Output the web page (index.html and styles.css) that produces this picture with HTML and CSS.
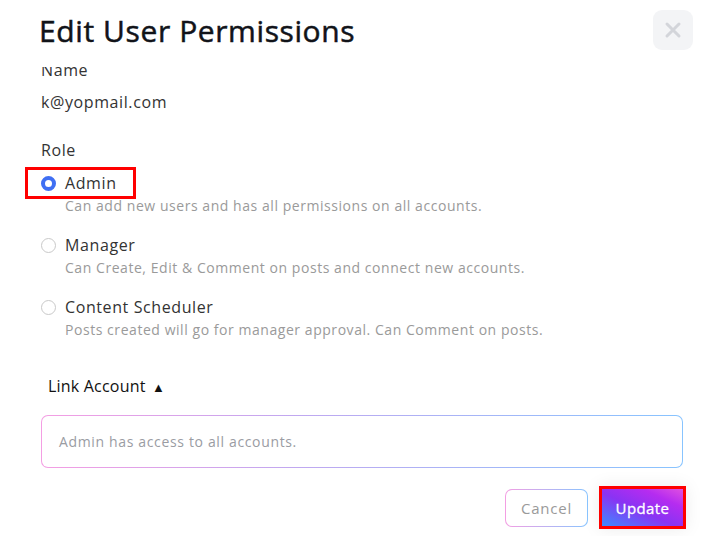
FILE: index.html
```html
<!DOCTYPE html>
<html>
<head>
<meta charset="utf-8">
<link rel="stylesheet" href="styles.css">
</head>
<body>
<div class="modal">
  <header class="head">
    <h1 class="title">Edit User Permissions</h1>
    <button class="close" aria-label="Close">
      <svg width="18" height="18" viewBox="0 0 18 18"><path d="M3 3 L15 15 M15 3 L3 15" stroke="#d3d5da" stroke-width="3" stroke-linecap="round"/></svg>
    </button>
  </header>
  <div class="body">
    <div class="inner">
      <div class="label name-label">Name</div>
      <div class="value">k@yopmail.com</div>
      <div class="label role-label">Role</div>
      <div class="options">
        <div class="opt">
          <div class="opt-row hl"><span class="radio on"></span><span class="opt-name">Admin</span></div>
          <div class="desc">Can add new users and has all permissions on all accounts.</div>
        </div>
        <div class="opt">
          <div class="opt-row"><span class="radio"></span><span class="opt-name">Manager</span></div>
          <div class="desc">Can Create, Edit &amp; Comment on posts and connect new accounts.</div>
        </div>
        <div class="opt">
          <div class="opt-row"><span class="radio"></span><span class="opt-name">Content Scheduler</span></div>
          <div class="desc">Posts created will go for manager approval. Can Comment on posts.</div>
        </div>
      </div>
      <div class="link">Link Account <span class="tri">▲</span></div>
      <div class="field">Admin has access to all accounts.</div>
      <div class="actions">
        <button class="btn cancel">Cancel</button>
        <button class="btn update">Update</button>
      </div>
    </div>
  </div>
</div>
</body>
</html>
```
FILE: styles.css
```css
html, body {
  margin: 0;
  padding: 0;
  background: #ffffff;
}
body {
  font-family: "Open Sans", "Noto Sans", sans-serif;
  color: #2b2b2b;
  width: 724px;
  height: 536px;
  overflow: hidden;
}
.modal {
  width: 724px;
  height: 536px;
  display: flex;
  flex-direction: column;
  background: #fff;
}
.head {
  height: 67px;
  flex: none;
  display: flex;
  align-items: flex-start;
  justify-content: space-between;
  padding: 0 31px 0 39px;
  background: #fff;
  position: relative;
  z-index: 2;
}
.title {
  margin: 10px 0 0 0;
  font-size: 30px;
  font-weight: 400;
  -webkit-text-stroke: 0.5px #111319;
  color: #111319;
  letter-spacing: 0.6px;
}
.close {
  margin-top: 10px;
  width: 40px;
  height: 40px;
  border: none;
  border-radius: 9px;
  background: #f3f4f6;
  display: flex;
  align-items: center;
  justify-content: center;
  padding: 0;
}
.body {
  flex: 1;
  overflow: hidden;
}
.inner {
  margin-top: -7px;
  padding: 0 41px;
}
.label, .value, .opt-row {
  font-size: 16px;
  letter-spacing: 0.6px;
  color: #333;
  line-height: 20px;
}
.value {
  margin-top: 12px;
}
.role-label {
  margin-top: 28px;
}
.options {
  margin-top: 13px;
  display: flex;
  flex-direction: column;
  gap: 20px;
}
.opt-row {
  display: inline-flex;
  align-items: center;
  gap: 9px;
}
.hl {
  border: 3px solid #ff0000;
  padding: 3px 16px 3px 13px;
  margin: -6px -19px -6px -16px;
  align-self: flex-start;
}
.opt {
  display: flex;
  flex-direction: column;
}
.radio {
  width: 15px;
  height: 15px;
  box-sizing: border-box;
  border-radius: 50%;
  border: 1px solid #c9c9c9;
  background: #fff;
  flex: none;
}
.radio.on {
  border: 4px solid #3f6ff3;
}
.desc {
  margin-top: 4px;
  margin-left: 24px;
  font-size: 14px;
  letter-spacing: 0.55px;
  color: #9a9a9a;
  line-height: 18px;
}
.link {
  margin-top: 37px;
  margin-left: 7px;
  font-size: 16px;
  letter-spacing: 0.2px;
  color: #111;
  line-height: 20px;
}
.tri {
  font-size: 13px;
  margin-left: 2px;
}
.field {
  margin-top: 18px;
  height: 53px;
  box-sizing: border-box;
  border: 1px solid transparent;
  border-radius: 7px;
  background: linear-gradient(#fff, #fff) padding-box,
              linear-gradient(90deg, #f49ee3, #c0a8f0 40%, #88c4ff) border-box;
  padding: 0 17px;
  display: flex;
  align-items: center;
  font-size: 14px;
  letter-spacing: 0.65px;
  color: #9a9ca3;
}
.actions {
  margin-top: 21px;
  display: flex;
  justify-content: flex-end;
  gap: 11px;
}
.btn {
  font-family: "Open Sans", "Noto Sans", sans-serif;
  font-size: 15px;
  height: 38px;
  border-radius: 7px;
  padding: 0;
}
.cancel {
  width: 83px;
  border: 1px solid transparent;
  background: linear-gradient(#fff, #fff) padding-box,
              linear-gradient(90deg, #f49ee3, #88c4ff) border-box;
  color: #9a9a9a;
  letter-spacing: 0.8px;
}
.update {
  width: 87px;
  height: 43px;
  margin-top: -3px;
  margin-right: -3px;
  border: 3px solid #ff0000;
  border-radius: 0;
  background: linear-gradient(to top right, #3d8bff 0%, #8a33f3 45%, #b52cf0 75%, #e050e0 100%);
  color: #fff;
  -webkit-text-stroke: 0.3px #fff;
  letter-spacing: 0.4px;
  box-shadow: 0 0 18px rgba(0, 0, 0, 0.08);
}
```
